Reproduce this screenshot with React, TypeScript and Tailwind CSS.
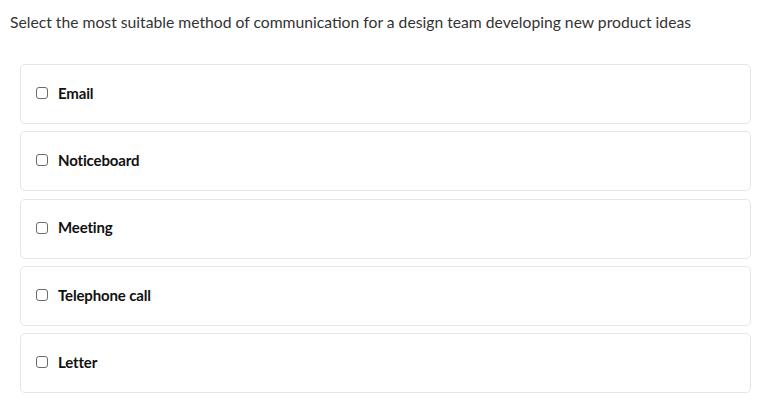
import React from "react";

const options = ["Email", "Noticeboard", "Meeting", "Telephone call", "Letter"];

const App = () => {
    return (
        <div className="w-[763px] h-[402px] bg-white font-['Lato',sans-serif] text-[#333]">
            {/* Question */}
            <p className="pl-[10px] pt-[12px] text-[15.7px] leading-[20px]">
                Select the most suitable method of communication for a design team developing new product ideas
            </p>

            {/* Options */}
            <div className="mt-[32px] ml-[20px] w-[731px] flex flex-col gap-[7.25px]">
                {options.map((o) => (
                    <label
                        key={o}
                        className="h-[60px] flex items-center border border-[#e3e6ea] rounded-[5px] pl-[15px] pb-[2px]"
                    >
                        <span className="w-[12px] h-[12px] border border-[#6b6b6b] rounded-[3px] bg-white" />
                        <span className="ml-[10px] text-[15px] font-bold text-[#111] tracking-[-0.15px]">{o}</span>
                    </label>
                ))}
            </div>
        </div>
    );
};

export default App;
